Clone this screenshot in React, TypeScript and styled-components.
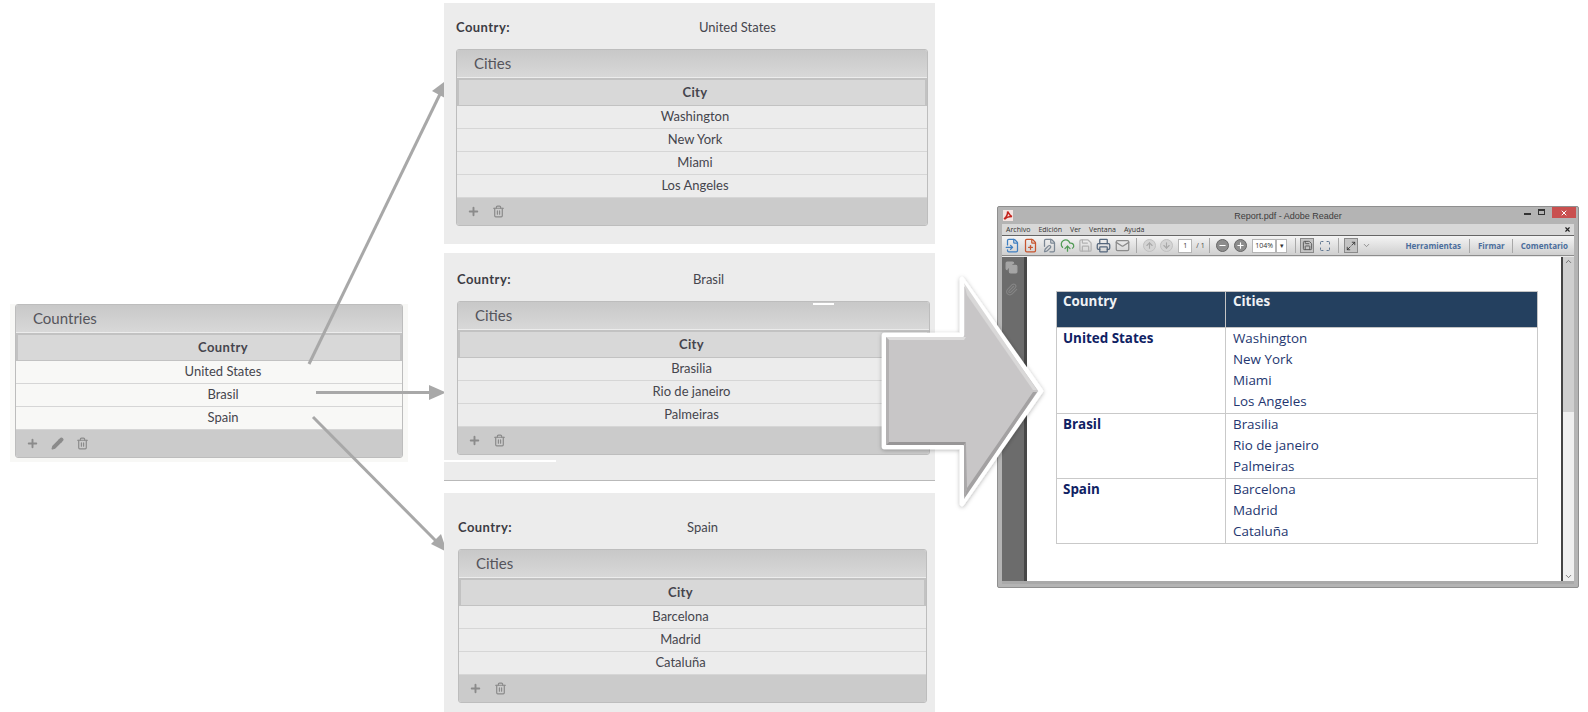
import styled, { createGlobalStyle } from 'styled-components';
import {
  ArrowDown,
  ArrowUp,
  ChevronDown,
  ChevronUp,
  CloudUpload,
  Copy,
  FileInput,
  FilePen,
  FilePlus,
  Mail,
  Maximize,
  Maximize2,
  Minus,
  Paperclip,
  Pencil,
  Plus,
  Printer,
  Save,
  Trash2,
  X,
} from 'lucide-react';

const GlobalStyle = createGlobalStyle`
  html, body {
    margin: 0;
    padding: 0;
    background: #fff;
  }
  * {
    box-sizing: border-box;
  }
`;

const Stage = styled.div`
  position: relative;
  display: flex;
  width: 1588px;
  height: 712px;
  overflow: hidden;
  background: #fff;
  font-family: Lato, 'Open Sans', sans-serif;
  color: #45454d;
`;

const LeftColumn = styled.div`
  width: 444px;
  padding: 304px 36px 0 10px;
`;

const MiddleColumn = styled.div`
  position: relative;
  z-index: 2;
  display: flex;
  flex-direction: column;
  width: 491px;
`;

const RightColumn = styled.div`
  padding: 206px 0 0 62px;
`;

const CountriesCard = styled.div`
  padding: 0 5px 4px;
  background: #f8f8f6;
`;

const DetailCard = styled.section<{ $top: number; $pad: number; $height: number; $line?: boolean }>`
  position: relative;
  height: ${(p) => p.$height}px;
  margin-top: ${(p) => p.$top}px;
  padding: 0 0 0 ${(p) => p.$pad}px;
  background: #ececec;
  border-bottom: ${(p) => (p.$line ? '1px solid #b9b9b9' : 'none')};
`;

const InfoRow = styled.div<{ $top: number }>`
  display: flex;
  align-items: center;
  height: 18px;
  margin: ${(p) => p.$top}px 0 13px;
  font-size: 13px;
`;

const InfoLabel = styled.span`
  width: 54px;
  font-weight: 700;
  letter-spacing: 0.45px;
  white-space: nowrap;
  color: #3c3c44;
`;

const InfoValue = styled.span<{ $shift: number }>`
  margin-left: ${(p) => p.$shift}px;
`;

const Panel = styled.div<{ $width: number }>`
  width: ${(p) => p.$width}px;
  border: 1px solid #bdbdbd;
  border-radius: 3px;
  overflow: hidden;
  background: #ececec;
`;

const PanelTitle = styled.div`
  height: 27px;
  padding: 0 0 0 17px;
  margin-bottom: 1px;
  background: linear-gradient(#c8c8c8, #d8d8d8);
  font-size: 15px;
  font-weight: 400;
  line-height: 27px;
  color: #55555c;
`;

const HeadCell = styled.div<{ $shift: number }>`
  height: 28px;
  padding-left: ${(p) => Math.max(p.$shift, 0) * 2}px;
  padding-right: ${(p) => Math.max(-p.$shift, 0) * 2}px;
  background: #d8d8d8;
  border: 2px solid #c2c2c2;
  border-bottom-width: 1px;
  font-size: 13px;
  font-weight: 700;
  letter-spacing: 0.4px;
  line-height: 24px;
  text-align: center;
  color: #45454d;
`;

const BodyCell = styled.div<{ $shift: number; $light?: boolean }>`
  height: 23px;
  padding-left: ${(p) => Math.max(p.$shift, 0) * 2}px;
  padding-right: ${(p) => Math.max(-p.$shift, 0) * 2}px;
  background: ${(p) => (p.$light ? '#f8f8f6' : '#ececec')};
  border-bottom: 1px solid #d6d6d6;
  font-size: 13px;
  line-height: 21px;
  text-align: center;
`;

const PanelFooter = styled.div`
  display: flex;
  align-items: center;
  gap: 12px;
  height: 27px;
  padding-left: 10px;
  background: #cbcbcb;
  color: #8b8b8b;
`;

const Streak = styled.span<{ $x: number; $y: number; $w: number }>`
  position: absolute;
  left: ${(p) => p.$x}px;
  top: ${(p) => p.$y}px;
  width: ${(p) => p.$w}px;
  height: 2px;
  background: #fff;
`;

const ArrowLayer = styled.svg`
  position: absolute;
  left: 0;
  top: 0;
  z-index: 1;
  pointer-events: none;
`;

const BigArrowLayer = styled.svg`
  position: absolute;
  left: 870px;
  top: 268px;
  z-index: 3;
  pointer-events: none;
`;

const ReaderWindow = styled.div`
  display: flex;
  flex-direction: column;
  width: 582px;
  height: 382px;
  padding: 0 4px 3px;
  background: #b4b4b4;
  border: 1px solid #8f8f8f;
  border-radius: 2px;
  font-family: 'Open Sans', sans-serif;
`;

const TitleBar = styled.div`
  position: relative;
  display: flex;
  align-items: center;
  justify-content: center;
  flex: none;
  height: 17px;
  font-family: 'Liberation Sans', sans-serif;
  font-size: 9px;
  color: #3d3d3d;
`;

const PdfBadge = styled.svg`
  position: absolute;
  left: 1px;
  top: 3px;
`;

const WindowControls = styled.div`
  position: absolute;
  right: -2px;
  top: 0;
  display: flex;
  align-items: center;
  gap: 7px;
  color: #333;
`;

const ControlGlyph = styled.span<{ $box?: boolean }>`
  width: 7px;
  height: ${(p) => (p.$box ? 6 : 2)}px;
  margin-top: ${(p) => (p.$box ? -2 : 3)}px;
  border: 1px solid #333;
  border-top-width: ${(p) => (p.$box ? 2 : 1)}px;
`;

const CloseButton = styled.span`
  display: flex;
  align-items: center;
  justify-content: center;
  width: 24px;
  height: 11px;
  background: #c9504f;
  color: #fff;
`;

const MenuBar = styled.div`
  display: flex;
  align-items: center;
  justify-content: space-between;
  flex: none;
  height: 11px;
  padding: 0 3px 0 4px;
  background: #d8d8d8;
  font-size: 7px;
  color: #333;
`;

const MenuItems = styled.div`
  display: flex;
  gap: 8px;
`;

const Toolbar = styled.div`
  display: flex;
  align-items: center;
  flex: none;
  height: 21px;
  padding: 0 6px 0 3px;
  background: linear-gradient(#f4f4f4, #cfcfcf);
  border-top: 1px solid #666;
  border-bottom: 1px solid #8d8d8d;
  color: #777;
`;

const ToolGroup = styled.div<{ $gap: number; $before?: number }>`
  display: flex;
  align-items: center;
  flex: none;
  gap: ${(p) => p.$gap}px;
  margin-left: ${(p) => p.$before ?? 0}px;
`;

const ToolSep = styled.span<{ $before: number; $after: number }>`
  flex: none;
  width: 1px;
  height: 15px;
  margin: 0 ${(p) => p.$after}px 0 ${(p) => p.$before}px;
  background: #a8a8a8;
`;

const RoundButton = styled.span<{ $dim?: boolean }>`
  display: flex;
  align-items: center;
  justify-content: center;
  width: 13px;
  height: 13px;
  border-radius: 50%;
  background: ${(p) => (p.$dim ? '#d4d4d4' : '#8c8c8c')};
  border: 1px solid ${(p) => (p.$dim ? '#c0c0c0' : '#666')};
  color: ${(p) => (p.$dim ? '#a8a8a8' : '#fff')};
`;

const PageInput = styled.span<{ $width: number; $before?: number }>`
  flex: none;
  width: ${(p) => p.$width}px;
  height: 14px;
  margin-left: ${(p) => p.$before ?? 0}px;
  background: #fff;
  border: 1px solid #b5b5b5;
  font-size: 7px;
  line-height: 12px;
  text-align: center;
  color: #333;
`;

const PageCount = styled.span`
  flex: none;
  margin-left: 4px;
  font-size: 7px;
  color: #444;
`;

const ActiveTool = styled.span`
  display: flex;
  align-items: center;
  justify-content: center;
  flex: none;
  width: 14px;
  height: 15px;
  background: #c4c4c4;
  border: 1px solid #8a8a8a;
  color: #555;
`;

const PlainTool = styled.span<{ $before: number }>`
  display: flex;
  flex: none;
  margin-left: ${(p) => p.$before}px;
`;

const TaskLinks = styled.div`
  display: flex;
  align-items: center;
  margin-left: auto;
  font-size: 8px;
  font-weight: 700;
  color: #4a6d9c;
`;

const TaskLink = styled.span<{ $line?: boolean }>`
  padding: 0 ${(p) => (p.$line ? 0 : 8)}px 0 ${(p) => (p.$line ? 8 : 0)}px;
  margin-right: ${(p) => (p.$line ? 7 : 0)}px;
  line-height: 14px;
  border-left: ${(p) => (p.$line ? '1px solid #a8a8a8' : 'none')};
  &:last-child {
    margin-right: 0;
  }
`;

const ReaderBody = styled.div`
  display: flex;
  flex: 1;
  min-height: 0;
  background: #fff;
  border-top: 1px solid #e8e8e8;
`;

const NavPane = styled.div`
  display: flex;
  flex-direction: column;
  align-items: center;
  gap: 9px;
  flex: none;
  width: 25px;
  padding: 4px 4px 0 0;
  background: #6c6c6c;
  border-right: 3px solid #474747;
  color: #a5a5a5;
`;

const PageArea = styled.div`
  flex: 1;
  padding: 34px 0 0 29px;
`;

const ScrollBar = styled.div`
  display: flex;
  flex-direction: column;
  justify-content: space-between;
  align-items: center;
  flex: none;
  width: 13px;
  background: linear-gradient(#cfcfcf 0 155px, #efefef 155px);
  border-left: 2px solid #444;
  color: #555;
`;

const ReportTable = styled.table`
  width: 482px;
  border-collapse: collapse;
  font-family: 'Open Sans', sans-serif;
  font-size: 13.4px;
  color: #23366f;
`;

const ReportHeadCell = styled.th<{ $pad: number }>`
  height: 35px;
  padding: 0 0 17px ${(p) => p.$pad}px;
  background: #24405f;
  border: 1px solid #c4c4c4;
  font-size: 13.4px;
  font-weight: 700;
  text-align: left;
  color: #eef1f4;
`;

const CountryCell = styled.td`
  width: 169px;
  padding: 0 0 0 6px;
  border: 1px solid #c9c9c9;
  font-weight: 700;
  line-height: 21px;
  vertical-align: top;
  color: #0f2163;
`;

const CitiesCell = styled.td`
  padding: 0 0 1px 7px;
  border: 1px solid #c9c9c9;
  line-height: 21px;
  vertical-align: top;
`;

const PageEdge = styled.div`
  height: 3px;
  flex: none;
  background: #a9a9a9;
`;

type PanelData = {
  title: string;
  width: number;
  shift: number;
  head: string;
  rows: string[];
  light?: boolean;
  edit?: boolean;
};

const DataPanel = ({ title, width, shift, head, rows, light, edit }: PanelData) => (
  <Panel $width={width}>
    <PanelTitle>{title}</PanelTitle>
    <HeadCell $shift={shift}>{head}</HeadCell>
    {rows.map((row) => (
      <BodyCell key={row} $shift={shift} $light={light}>
        {row}
      </BodyCell>
    ))}
    <PanelFooter>
      <Plus size={13} strokeWidth={3.5} />
      {edit && <Pencil size={13} strokeWidth={2} fill="currentColor" />}
      <Trash2 size={13} strokeWidth={2.2} />
    </PanelFooter>
  </Panel>
);

const details = [
  {
    country: 'United States',
    cardTop: 3,
    height: 241,
    pad: 12,
    infoTop: 15,
    valueShift: 189,
    width: 472,
    shift: 3,
    rows: ['Washington', 'New York', 'Miami', 'Los Angeles'],
  },
  {
    country: 'Brasil',
    cardTop: 9,
    height: 228,
    pad: 13,
    infoTop: 17,
    valueShift: 182,
    width: 473,
    shift: -2,
    rows: ['Brasilia', 'Rio de janeiro', 'Palmeiras'],
    line: true,
  },
  {
    country: 'Spain',
    cardTop: 12,
    height: 219,
    pad: 14,
    infoTop: 25,
    valueShift: 175,
    width: 469,
    shift: -12,
    rows: ['Barcelona', 'Madrid', 'Cataluña'],
  },
];

const report = [
  { country: 'United States', cities: ['Washington', 'New York', 'Miami', 'Los Angeles'] },
  { country: 'Brasil', cities: ['Brasilia', 'Rio de janeiro', 'Palmeiras'] },
  { country: 'Spain', cities: ['Barcelona', 'Madrid', 'Cataluña'] },
];

const FlowArrows = () => (
  <ArrowLayer width="1588" height="712" viewBox="0 0 1588 712">
    <g stroke="#a8a8a8" strokeWidth="3" fill="#a8a8a8">
      <line x1="309" y1="364" x2="441" y2="92" />
      <polygon points="448,79 445,98 432,91" stroke="none" />
      <line x1="316" y1="392.5" x2="432" y2="392.5" />
      <polygon points="446,392.5 429,385 429,400" stroke="none" />
      <line x1="313" y1="417" x2="436" y2="541" />
      <polygon points="447,552 431,544 441,534" stroke="none" />
    </g>
  </ArrowLayer>
);

const BigArrow = () => (
  <BigArrowLayer width="190" height="250" viewBox="870 268 190 250">
    <defs>
      <filter id="arrowShadow" x="-10%" y="-10%" width="120%" height="120%">
        <feDropShadow dx="0" dy="1" stdDeviation="2" floodColor="#000" floodOpacity="0.3" />
      </filter>
      <filter id="bevelBlur" x="-5%" y="-5%" width="110%" height="110%">
        <feGaussianBlur stdDeviation="0.6" />
      </filter>
    </defs>
    <polygon
      points="884,335 962,335 962,279 1041,391 962,504 962,447 884,447"
      fill="#c8c6c7"
      stroke="#fff"
      strokeWidth="4.5"
      strokeLinejoin="round"
      filter="url(#arrowShadow)"
    />
    <g filter="url(#bevelBlur)">
      <polygon points="886,337 966,337 964,340 889,340" fill="#dedddd" />
      <polygon points="964,283 1037,390 1033,390 967,295" fill="#d9d8d8" />
      <polygon points="886,337 889,340 889,442 886,445" fill="#b3b1b2" />
      <polygon points="886,445 889,442 966,442 964,445" fill="#989697" />
      <polygon points="964,445 966,442 967,488 964,499" fill="#aaa8a9" />
      <polygon points="1037,392 1033,392 967,488 964,499" fill="#a3a1a2" />
    </g>
  </BigArrowLayer>
);

const App = () => (
  <Stage>
    <GlobalStyle />
    <LeftColumn>
      <CountriesCard>
        <DataPanel
          title="Countries"
          width={388}
          shift={14}
          head="Country"
          rows={['United States', 'Brasil', 'Spain']}
          light
          edit
        />
      </CountriesCard>
    </LeftColumn>
    <FlowArrows />
    <MiddleColumn>
      {details.map((d) => (
        <DetailCard key={d.country} $top={d.cardTop} $pad={d.pad} $height={d.height} $line={d.line}>
          <InfoRow $top={d.infoTop}>
            <InfoLabel>Country:</InfoLabel>
            <InfoValue $shift={d.valueShift}>{d.country}</InfoValue>
          </InfoRow>
          <DataPanel title="Cities" width={d.width} shift={d.shift} head="City" rows={d.rows} />
          {d.line && (
            <>
              <Streak $x={369} $y={50} $w={21} />
              <Streak $x={0} $y={207} $w={112} />
            </>
          )}
        </DetailCard>
      ))}
    </MiddleColumn>
    <RightColumn>
      <ReaderWindow>
        <TitleBar>
          <PdfBadge width="10" height="11" viewBox="0 0 10 11">
            <rect width="10" height="11" fill="#f3e4e2" />
            <path d="M1 9 C4 7 5 3 4.5 1.5 C6 4 7 6 9 6.5 C6.5 6.5 3.5 7 2 9" fill="none" stroke="#c4221c" strokeWidth="1.6" />
          </PdfBadge>
          Report.pdf - Adobe Reader
          <WindowControls>
            <ControlGlyph />
            <ControlGlyph $box />
            <CloseButton>
              <X size={8} strokeWidth={3} />
            </CloseButton>
          </WindowControls>
        </TitleBar>
        <MenuBar>
          <MenuItems>
            <span>Archivo</span>
            <span>Edición</span>
            <span>Ver</span>
            <span>Ventana</span>
            <span>Ayuda</span>
          </MenuItems>
          <X size={7} strokeWidth={4} color="#222" />
        </MenuBar>
        <Toolbar>
          <ToolGroup $gap={3.3}>
            <FileInput size={15} color="#3f7fc1" />
            <FilePlus size={15} color="#c7552f" />
            <FilePen size={15} color="#7b8794" />
            <CloudUpload size={15} color="#4f9a53" />
            <Save size={15} color="#b2b2b2" />
            <Printer size={15} color="#54667c" />
            <Mail size={15} color="#8b8b8b" />
          </ToolGroup>
          <ToolSep $before={6} $after={6} />
          <ToolGroup $gap={4}>
            <RoundButton $dim>
              <ArrowUp size={9} strokeWidth={3} />
            </RoundButton>
            <RoundButton $dim>
              <ArrowDown size={9} strokeWidth={3} />
            </RoundButton>
          </ToolGroup>
          <PageInput $width={14} $before={5.5}>
            1
          </PageInput>
          <PageCount>/ 1</PageCount>
          <ToolSep $before={4} $after={6} />
          <ToolGroup $gap={5}>
            <RoundButton>
              <Minus size={9} strokeWidth={3} />
            </RoundButton>
            <RoundButton>
              <Plus size={9} strokeWidth={3} />
            </RoundButton>
          </ToolGroup>
          <PageInput $width={24} $before={5.5}>
            104%
          </PageInput>
          <PageInput $width={11}>▾</PageInput>
          <ToolSep $before={8} $after={4} />
          <ActiveTool>
            <Save size={11} />
          </ActiveTool>
          <PlainTool $before={5}>
            <Maximize size={12} color="#5f7690" />
          </PlainTool>
          <ToolSep $before={7} $after={5} />
          <ActiveTool>
            <Maximize2 size={10} color="#333" />
          </ActiveTool>
          <PlainTool $before={4}>
            <ChevronDown size={9} />
          </PlainTool>
          <TaskLinks>
            <TaskLink>Herramientas</TaskLink>
            <TaskLink $line>Firmar</TaskLink>
            <TaskLink $line>Comentario</TaskLink>
          </TaskLinks>
        </Toolbar>
        <ReaderBody>
          <NavPane>
            <Copy size={13} fill="#a5a5a5" />
            <Paperclip size={13} color="#858585" />
          </NavPane>
          <PageArea>
            <ReportTable>
              <thead>
                <tr>
                  <ReportHeadCell $pad={6}>Country</ReportHeadCell>
                  <ReportHeadCell $pad={7}>Cities</ReportHeadCell>
                </tr>
              </thead>
              <tbody>
                {report.map((row) => (
                  <tr key={row.country}>
                    <CountryCell>{row.country}</CountryCell>
                    <CitiesCell>
                      {row.cities.map((city) => (
                        <div key={city}>{city}</div>
                      ))}
                    </CitiesCell>
                  </tr>
                ))}
              </tbody>
            </ReportTable>
          </PageArea>
          <ScrollBar>
            <ChevronUp size={9} />
            <ChevronDown size={9} />
          </ScrollBar>
        </ReaderBody>
        <PageEdge />
      </ReaderWindow>
    </RightColumn>
    <BigArrow />
  </Stage>
);

export default App;
